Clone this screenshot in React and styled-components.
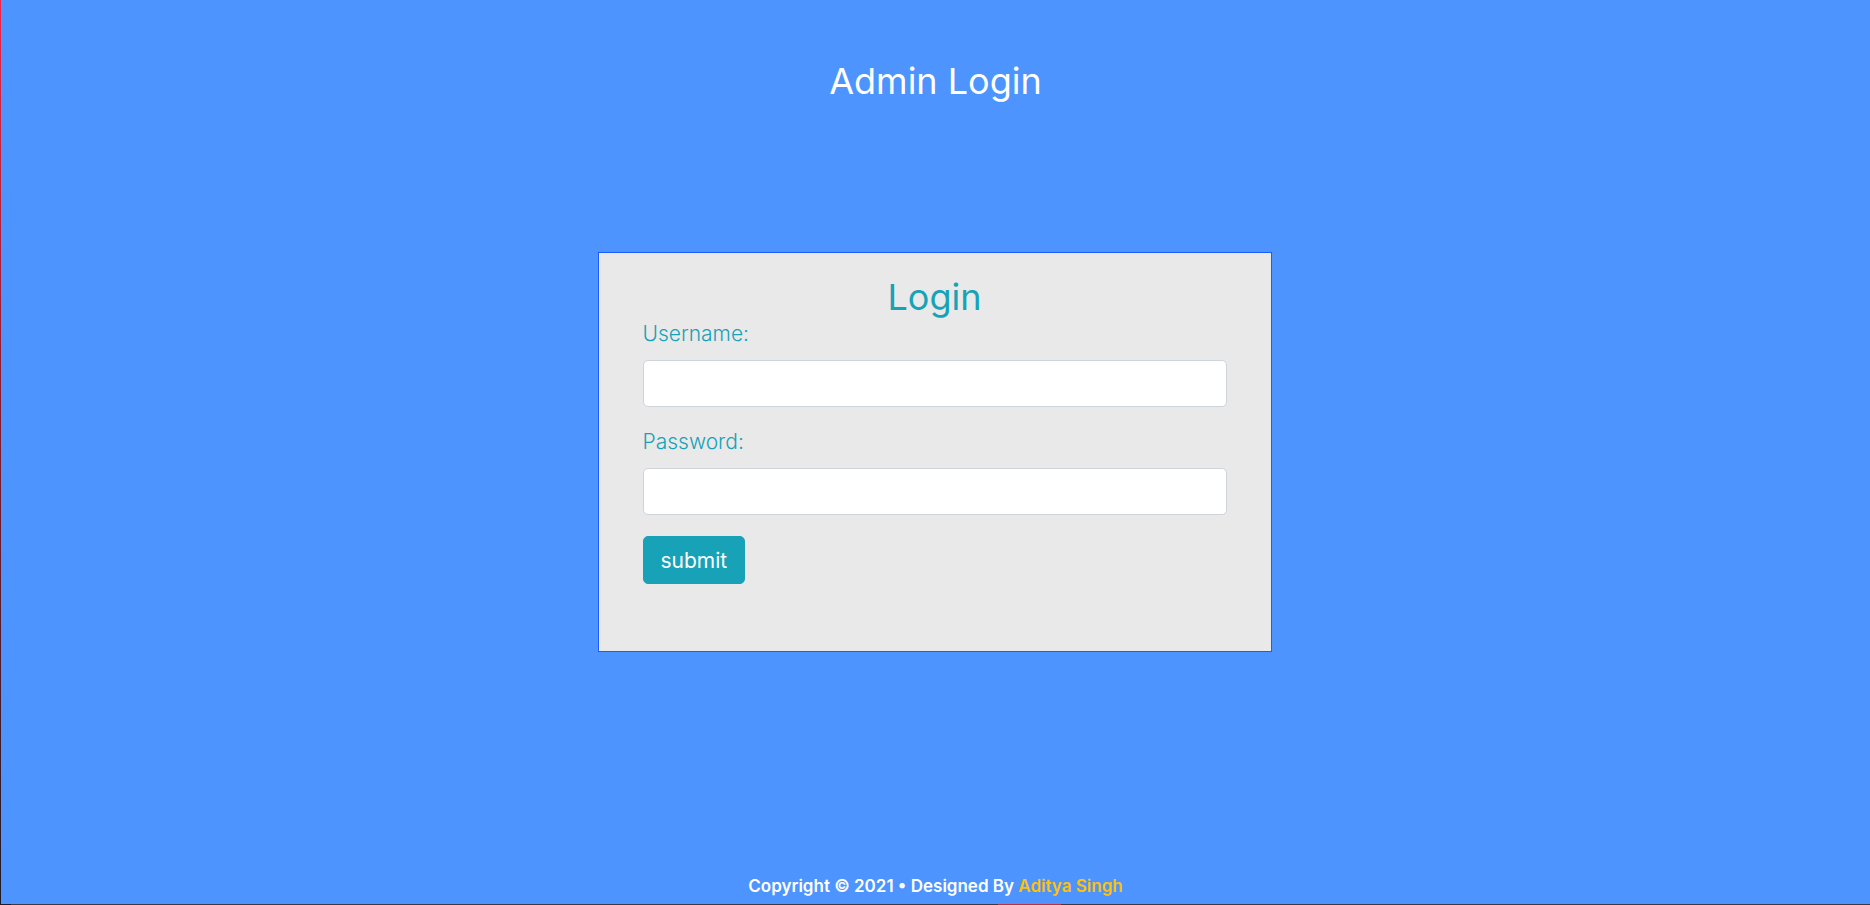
import React from 'react';
import styled, { createGlobalStyle } from 'styled-components';

const GlobalStyle = createGlobalStyle`
   * {
      box-sizing: border-box;
   }

   body {
      margin: 0;
      font-family: Inter, 'Noto Sans', sans-serif;
   }
`;

const App = () => {
   return (
      <>
         <GlobalStyle />
         <Page>
            <Title>Admin Login</Title>

            <Main>
               <Card>
                  <CardTitle>Login</CardTitle>

                  <Form onSubmit={e => e.preventDefault()}>
                     <Label htmlFor="username">Username:</Label>
                     <Input id="username" type="text" />

                     <Label htmlFor="password" $spaced>
                        Password:
                     </Label>
                     <Input id="password" type="password" />

                     <Button type="submit">submit</Button>
                  </Form>
               </Card>
            </Main>

            <Footer>
               Copyright © 2021 • Designed By <Author>Aditya Singh</Author>
            </Footer>
            <BottomLine />
         </Page>
      </>
   );
};

export default App;

const Page = styled.div`
   min-height: 100vh;
   display: flex;
   flex-direction: column;
   background-color: #4d94ff;
   border-left: 1px solid;
   border-image: linear-gradient(#f0264a, #8a1c2e 45%, #1c1c2c) 1;
`;

const Title = styled.h1`
   margin: 0;
   padding-top: 60px;
   font-size: 36px;
   line-height: 43px;
   font-weight: 400;
   color: #fff;
   text-align: center;
`;

const Main = styled.main`
   flex: 1;
   display: flex;
   justify-content: center;
   align-items: flex-start;
   padding-top: 149px;
   padding-right: 2px;
`;

const Card = styled.div`
   width: 674px;
   padding: 23px 44px 67px 44px;
   background-color: #e9e9e9;
   border: 1px solid #1a5cff;
`;

const CardTitle = styled.h2`
   margin: 0;
   font-size: 36px;
   line-height: 43px;
   font-weight: 400;
   color: #17a2b8;
   text-align: center;
`;

const Form = styled.form`
   display: flex;
   flex-direction: column;
   align-items: flex-start;
`;

const Label = styled.label`
   margin-top: ${props => (props.$spaced ? '20px' : '0')};
   margin-bottom: 11px;
   font-size: 21px;
   line-height: 30px;
   font-weight: 300;
   color: #17a2b8;
`;

const Input = styled.input`
   width: 100%;
   height: 47px;
   padding: 8px 16px;
   font-family: inherit;
   font-size: 20px;
   background-color: #fff;
   border: 1px solid #ced4da;
   border-radius: 5px;
   outline: none;
`;

const Button = styled.button`
   margin-top: 21px;
   height: 48px;
   padding: 0 17px;
   font-family: inherit;
   font-size: 21px;
   font-weight: 400;
   color: #fff;
   background-color: #17a2b8;
   border: 1px solid #17a2b8;
   border-radius: 5px;
   cursor: pointer;
`;

const Footer = styled.footer`
   padding-bottom: 6px;
   font-size: 17px;
   line-height: 24px;
   font-weight: 600;
   color: #fff;
   text-align: center;
`;

const Author = styled.span`
   color: #ffc107;
`;

const BottomLine = styled.div`
   height: 1px;
   background: linear-gradient(
      to right,
      #1c1c2c 0 10px,
      #3a3a44 10px 997px,
      #c0303c 997px 1060px,
      #3a3a44 1060px
   );
`;
